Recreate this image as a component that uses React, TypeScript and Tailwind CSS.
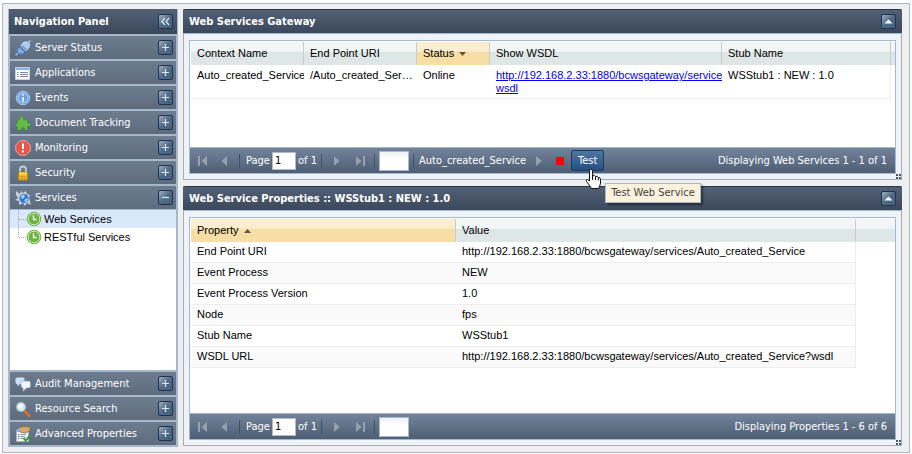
import React from "react";

const sansUi = "font-['DejaVu_Sans_Condensed','DejaVu_Sans',sans-serif]";
const sansGrid = "font-['Liberation_Sans',Arial,sans-serif]";

type IconName = "plug" | "list" | "info" | "puzzle" | "alert" | "lock" | "globe" | "chat" | "search" | "props";

function Icon({ name }: { name: IconName }) {
  return (
    <svg viewBox="0 0 16 16" className="size-4 shrink-0" aria-hidden="true">
      {name === "plug" && (
        <g>
          <path d="M.5 15.5 3 13" stroke="#8fbcf0" strokeWidth="1.6" />
          <path d="M2.3 9.2 5 6.5 10.3 11.8 7.5 14Q4.500 14.500 2.700 13.200 1.500 11.500 2.300 9.200Z" fill="#76a9e8" stroke="#3c6ca8" strokeWidth=".7" />
          <path d="M5.600 5.800 8.500 2.200Q11.500 1 13.800 2.600 15.200 5 14 7.600L10.800 11Z" fill="#a8cdf5" stroke="#d7e9fb" strokeWidth=".7" />
          <path d="M4.500 6 11 12.300M7 5.500l4.500 4.500" stroke="#36597f" strokeWidth="1" />
          <path d="M13.500 2.500 15.500.5" stroke="#8fbcf0" strokeWidth="1.600" />
        </g>
      )}
      {name === "list" && (
        <g>
          <path fill="#fff" stroke="#b9d3f4" d="M.5 2.500h14v12H.5z" />
          <path fill="#86b1ec" d="M1 3h13v2H1z" />
          <path stroke="#6f8fb4" d="M2 7.500h1.500M2 9.500h1.500M2 11.500h1.500" />
          <path stroke="#7b8794" d="M5 7.500h8M5 9.500h8M5 11.500h8" />
        </g>
      )}
      {name === "info" && (
        <g>
          <circle cx="8" cy="8" r="6.800" fill="#5b92d8" stroke="#a9cdf5" />
          <circle cx="8" cy="8" r="5" fill="#6c9fdf" stroke="#e3effc" strokeWidth=".8" />
          <path stroke="#fff" strokeWidth="1.600" d="M8 4.300v1.400M8 7v4.500" />
        </g>
      )}
      {name === "puzzle" && (
        <path
          d="M5 5 4.500 3Q5 .800 7 1.200 9 1.500 8.500 3.500L8.500 5H12.500V8Q15.500 7 15.500 9.500 15.500 12 12.500 11V15H9.500Q10 12.500 8 12.500 6.200 12.500 6.500 15H2.500V12Q.500 12 .5 9.800.500 8 2.500 8.500V5Z"
          fill="#63bb4b"
          stroke="#3f9433"
          strokeWidth=".7"
        />
      )}
      {name === "alert" && (
        <g>
          <path d="M5 .8h6L15.200 5v6L11 15.200H5L.8 11V5Z" fill="#e4574c" stroke="#f4a29a" />
          <path stroke="#fff" strokeWidth="2" d="M8 3.500v5.500M8 10.500v2" />
        </g>
      )}
      {name === "lock" && (
        <g>
          <path d="M5 8V4.500Q5 1.500 8 1.500T11 4.500V8" fill="none" stroke="#c9ccd0" strokeWidth="1.800" />
          <rect x="3.500" y="7" width="9" height="8" rx="1" fill="#f4bd1c" stroke="#b98410" strokeWidth=".8" />
          <path stroke="#ffe77b" strokeWidth="1.500" d="M4.500 8.500h7" />
          <path stroke="#dc9b10" d="M4.500 11.500h7M4.500 13.500h7" />
        </g>
      )}
      {name === "globe" && (
        <g>
          <path d="m1 1 4 3 1-3 2 2 3-2 1 3 3 1-1 3 1 3 1 4-4-2-2 3-2-3-4 2V11L0 10l3-2-2-3Z" fill="#c5d0dc" />
          <circle cx="9" cy="8.500" r="4.500" fill="#2f75dc" />
          <path d="M6 6.500Q8 4 10 6L8.500 8 7 9ZM10 9l3-.5-1.500 3-2 .5Z" fill="#bfe0ff" />
        </g>
      )}
      {name === "chat" && (
        <g>
          <path d="M2.500 1.500H8Q9.500 1.500 9.500 3V6.500Q9.500 8 8 8H5L2.500 10.500V8Q.500 8 .500 6.500V3Q.500 1.500 2.500 1.500Z" fill="#cfe1f7" />
          <path d="M7.500 5H13.500Q15.500 5 15.500 6.800V10Q15.500 12 13.500 12H11.500L8 15.500V12Q6 11.500 6 10V6.800Q6 5 7.500 5Z" fill="#f1f6fd" stroke="#8298b3" strokeWidth=".6" />
        </g>
      )}
      {name === "search" && (
        <g>
          <path d="m9.500 10 5 5" stroke="#e8731c" strokeWidth="2.400" strokeLinecap="round" />
          <circle cx="6" cy="6" r="4.500" fill="#d7ebfb" stroke="#a6b8c9" strokeWidth="1.200" />
          <circle cx="5" cy="5" r="2" fill="#fff" />
        </g>
      )}
      {name === "props" && (
        <g>
          <path d="M1.500 5.500h12v10h-12z" fill="#f3f7fc" stroke="#9fb4cc" strokeWidth=".7" />
          <path d="M4 1.500 9 .5l6 .5v4L10 7 5 6 3 4Z" fill="#d9a76b" stroke="#8e6434" strokeWidth=".7" />
          <path d="M1.500 3.500 5 2v3H1Z" fill="#7fb0ea" />
          <path stroke="#5d7fa6" d="M3 8.500h1.500M3 10.500h1.500M3 12.500h1.500" />
          <path stroke="#8c98a5" d="M5.500 8.500H11M5.500 10.500H10M5.500 12.500H8" />
          <path d="m8.500 12 2.300 2.500L15 9.500" fill="none" stroke="#2ba32b" strokeWidth="2" />
        </g>
      )}
    </svg>
  );
}

type ToolKind = "plus" | "minus" | "left" | "up";

function ToolButton({ kind, label }: { kind: ToolKind; label: string }) {
  return (
    <button
      type="button"
      aria-label={label}
      className="flex size-[15px] shrink-0 items-center justify-center rounded-[2px] border border-[#1d3350] bg-linear-to-br from-[#a3b0bd] via-[#4f6a86] to-[#46617f]"
    >
      <svg viewBox="0 0 13 13" className="size-[13px] shrink-0" fill="none" stroke="#dfe6ee" aria-hidden="true">
        {kind === "plus" && <path d="M3 6.500h7M6.500 3v7" strokeWidth="1.200" />}
        {kind === "minus" && <path d="M3 6.500h7" strokeWidth="1.200" />}
        {kind === "left" && <path d="M6 3 3 6.500 6 10M10 3 7 6.500 10 10" strokeWidth="1.300" />}
        {kind === "up" && <path d="M2.500 8.500 6.500 4.500 10.500 8.500Z" fill="#fff" stroke="none" />}
      </svg>
    </button>
  );
}

function NavItem({ icon, text, open = false }: { icon: IconName; text: string; open?: boolean }) {
  return (
    <div className="flex h-[23px] shrink-0 items-center bg-linear-to-b from-[#6e7c90] to-[#5d6b7d] pr-[3px] pl-[5px]">
      <Icon name={icon} />
      <span className="ml-1 flex-1 text-[11px] leading-4 text-white">{text}</span>
      <ToolButton kind={open ? "minus" : "plus"} label={`${open ? "Collapse" : "Expand"} ${text}`} />
    </div>
  );
}

function TreeLeaf({ text, selected = false }: { text: string; selected?: boolean }) {
  return (
    <li className={`flex h-[18px] items-center pl-2 ${selected ? "bg-[#d9e8fb]" : ""}`}>
      <svg viewBox="0 0 8 18" className="h-[18px] w-2 shrink-0" fill="none" stroke="#a5a5a5" strokeDasharray="1 1" aria-hidden="true">
        <path d={selected ? "M.5 0v18M1 9.500h7" : "M.5 0v9M1 9.500h7"} />
      </svg>
      <svg viewBox="0 0 16 16" className="size-4 shrink-0" aria-hidden="true">
        <circle cx="8" cy="8" r="6.800" fill="#6db33f" stroke="#6db33f" />
        <circle cx="8" cy="8" r="5.800" fill="none" stroke="#eaf6e0" strokeWidth=".8" />
        <path d="M7.500 4v4.500h3" fill="none" stroke="#fff" strokeWidth="1.300" />
      </svg>
      <a href="#" className="ml-[2px] text-[11px] leading-4 text-black">
        {text}
      </a>
    </li>
  );
}

function Navigation() {
  return (
    <nav className={`flex w-[170px] shrink-0 flex-col gap-[2px] border-x-2 border-b-2 border-[#a5b8cc] bg-[#a5b8cc] ${sansUi}`}>
      <header className="-mx-px flex h-[25px] shrink-0 items-center justify-between bg-linear-to-b from-[#536177] to-[#3b485b] pr-1 pl-[5px]">
        <h2 className="text-[11px] leading-4 font-bold text-white">Navigation Panel</h2>
        <ToolButton kind="left" label="Collapse navigation" />
      </header>
      <NavItem icon="plug" text="Server Status" />
      <NavItem icon="list" text="Applications" />
      <NavItem icon="info" text="Events" />
      <NavItem icon="puzzle" text="Document Tracking" />
      <NavItem icon="alert" text="Monitoring" />
      <NavItem icon="lock" text="Security" />
      <NavItem icon="globe" text="Services" open />
      <ul className={`-mt-px flex-1 bg-white ${sansGrid}`}>
        <TreeLeaf text="Web Services" selected />
        <TreeLeaf text="RESTful Services" />
      </ul>
      <NavItem icon="chat" text="Audit Management" />
      <NavItem icon="search" text="Resource Search" />
      <NavItem icon="props" text="Advanced Properties" />
    </nav>
  );
}

function Separator() {
  return <span className="h-[14px] w-px shrink-0 bg-[#3f5068]" />;
}

function PageButton({ label, path, bar, className }: { label: string; path: string; bar?: string; className: string }) {
  return (
    <button type="button" aria-label={label} className={`shrink-0 ${className}`}>
      <svg viewBox="0 0 12 12" className="size-3" aria-hidden="true">
        <path d={path} fill="#97a1ae" />
        {bar && <path d={bar} fill="#97a1ae" />}
      </svg>
    </button>
  );
}

function Pager({ id, summary, children }: { id: string; summary: string; children?: React.ReactNode }) {
  return (
    <footer
      className={`flex h-[26px] shrink-0 items-center border-t border-[#a5b8cc] bg-linear-to-b from-[#72839b] to-[#4e5e74] pr-2 pl-[7px] text-[11px] leading-4 whitespace-nowrap text-white ${sansUi}`}
    >
      <PageButton label="First page" path="M10 1v10L4.500 6Z" bar="M1 1h2v10H1z" className="w-3" />
      <PageButton label="Previous page" path="M8 1v10L2.500 6Z" className="ml-[10px] w-3" />
      <span className="ml-2 flex w-[82px] items-center">
        <Separator />
        <label htmlFor={`${id}-page`} className="ml-[6px] w-[26px] shrink-0">
          Page
        </label>
        <input
          id={`${id}-page`}
          defaultValue="1"
          className="h-[18px] w-6 shrink-0 border border-[#b5b8c8] bg-white px-[2px] text-black"
        />
        <span className="ml-[2px]">of 1</span>
      </span>
      <span className="flex items-center">
        <Separator />
        <PageButton label="Next page" path="M3 1v10L8.500 6Z" className="ml-[9px] w-3" />
        <PageButton label="Last page" path="M2 1v10L7.500 6Z" bar="M9 1h2v10H9z" className="ml-[11px] w-3" />
      </span>
      <span className="ml-2 flex items-center">
        <Separator />
        <input
          aria-label="Page size"
          className="ml-1 h-5 w-[30px] border border-[#a9b9cb] bg-linear-to-b from-[#eef0f2] to-white to-40% px-[2px] text-black"
        />
      </span>
      {children}
      <span className="ml-auto">{summary}</span>
    </footer>
  );
}

function Panel({ title, className, children }: { title: string; className: string; children: React.ReactNode }) {
  return (
    <section className={`relative flex flex-col border border-t-0 border-[#a9adb5] bg-[#eef3f9] ${className}`}>
      <header
        className={`-mx-px flex h-[25px] shrink-0 items-center justify-between rounded-t-[2px] border-t border-b border-t-[#28364a] border-b-[#a5b8cc] bg-linear-to-b from-[#536177] to-[#3b485b] pr-[6px] pl-[6px] ${sansUi}`}
      >
        <h2 className="text-[11px] leading-4 font-bold text-white">{title}</h2>
        <ToolButton kind="up" label={`Collapse ${title}`} />
      </header>
      <div className="m-[5px] mt-[6px] flex flex-1 flex-col border border-[#a5b8cc] bg-white">{children}</div>
      <svg viewBox="0 0 5 5" className="absolute right-0 bottom-0 size-[5px]" aria-hidden="true">
        <path d="M0 0h2v2H0zM3 0h2v2H3zM0 3h2v2H0zM3 3h2v2H3z" fill="#3f5a74" />
      </svg>
    </section>
  );
}

const headCell =
  "h-[23px] border-r border-[#c9cdd1] bg-linear-to-b from-[#f2f6f6] from-40% to-[#dfe6e6] to-45% px-[6px] text-left font-normal";
const sortedCell =
  "h-[23px] border-r border-[#c9cdd1] bg-linear-to-b from-[#fbeed0] from-40% to-[#f6dea4] to-45% px-[6px] text-left font-normal";

function SortMark({ up = false }: { up?: boolean }) {
  return (
    <svg viewBox="0 0 7 4" className="ml-[5px] inline-block h-1 w-[7px] align-middle" aria-hidden="true">
      <path d={up ? "M0 4 3.500 0 7 4Z" : "M0 0h7L3.500 4Z"} fill="#6b5434" />
    </svg>
  );
}

function GatewayTable() {
  return (
    <div className={`min-h-[106px] flex-1 pt-px pl-px ${sansGrid}`}>
      <table className="w-full table-fixed border-separate border-spacing-0 text-[11px] leading-[13px] text-black">
        <colgroup>
          <col className="w-[113px]" />
          <col className="w-[113px]" />
          <col className="w-[73px]" />
          <col className="w-[232px]" />
          <col />
          <col className="w-1" />
        </colgroup>
        <thead>
          <tr>
            <th className={headCell}>Context Name</th>
            <th className={headCell}>End Point URI</th>
            <th className={sortedCell}>
              Status
              <SortMark />
            </th>
            <th className={headCell}>Show WSDL</th>
            <th className={headCell}>Stub Name</th>
            <td className="bg-linear-to-b from-[#f2f6f6] from-40% to-[#dfe6e6] to-45%" />
          </tr>
        </thead>
        <tbody>
          <tr className="h-[34px] align-top">
            <td className="overflow-hidden border-b border-[#ededed] pt-1 pl-[6px] whitespace-nowrap">Auto_created_Service</td>
            <td className="truncate border-b border-[#ededed] pt-1 pr-1 pl-[6px]">/Auto_created_Service</td>
            <td className="border-b border-[#ededed] pt-1 pl-[6px]">Online</td>
            <td className="overflow-hidden border-b border-[#ededed] pt-1 pl-[6px] whitespace-nowrap">
              <a href="#" className="text-[#0000ee] underline">
                http://192.168.2.33:1880/bcwsgateway/service
                <br />
                wsdl
              </a>
            </td>
            <td className="border-r border-b border-[#ededed] pt-1 pl-[6px]">WSStub1 : NEW : 1.0</td>
            <td />
          </tr>
        </tbody>
      </table>
    </div>
  );
}

const properties = [
  ["End Point URI", "http://192.168.2.33:1880/bcwsgateway/services/Auto_created_Service"],
  ["Event Process", "NEW"],
  ["Event Process Version", "1.0"],
  ["Node", "fps"],
  ["Stub Name", "WSStub1"],
  ["WSDL URL", "http://192.168.2.33:1880/bcwsgateway/services/Auto_created_Service?wsdl"],
];

function PropertiesTable() {
  return (
    <div className={`flex-1 pt-px pl-px ${sansGrid}`}>
      <table className="w-full table-fixed border-separate border-spacing-0 text-[11px] leading-[13px] text-black">
        <colgroup>
          <col className="w-[265px]" />
          <col />
          <col className="w-[39px]" />
        </colgroup>
        <thead>
          <tr>
            <th className={sortedCell}>
              Property
              <SortMark up />
            </th>
            <th className={headCell}>Value</th>
            <td className="bg-linear-to-b from-[#f2f6f6] from-40% to-[#dfe6e6] to-45%" />
          </tr>
        </thead>
        <tbody>
          {properties.map(([name, value], i) => (
            <tr key={name} className={`h-[21px] align-top ${i % 2 ? "bg-[#fafafa]" : "bg-white"}`}>
              <td className="border-b border-[#ededed] pt-[3px] pl-[6px]">{name}</td>
              <td className="border-r border-b border-[#ededed] pt-[3px] pl-[6px]">{value}</td>
              <td className="bg-white" />
            </tr>
          ))}
        </tbody>
      </table>
    </div>
  );
}

export default function App() {
  return (
    <div className="flex min-h-screen bg-white px-[2px] pt-[3px] pb-px">
      <main className="flex flex-1 gap-[5px] border border-[#a5b8cc] bg-[#efefef] pt-[5px] pr-[7px] pb-[5px] pl-[5px]">
        <Navigation />
        <div className="flex min-w-0 flex-1 flex-col gap-[6px] pb-px">
          <Panel title="Web Services Gateway" className="z-10">
            <GatewayTable />
            <Pager id="gateway" summary="Displaying Web Services 1 - 1 of 1">
              <span className="ml-1 flex items-center">
                <Separator />
                <span className="ml-[5px]">Auto_created_Service</span>
                <svg viewBox="0 0 6 12" className="ml-[10px] h-3 w-[6px]" aria-hidden="true">
                  <path d="M0 1v10L6 6Z" fill="#97a1ae" />
                </svg>
                <span className="ml-[14px] size-2 bg-[#ff0000]" />
                <span className="relative ml-[7px]">
                  <button
                    type="button"
                    aria-describedby="test-tip"
                    className="block h-[21px] w-[33px] rounded-[2px] border border-[#1d3a5c] bg-linear-to-b from-[#4c77a5] to-[#264f7f] text-center"
                  >
                    Test
                  </button>
                  <svg viewBox="0 0 17 22" className="absolute top-[18px] left-[14px] h-[22px] w-[17px]" aria-hidden="true">
                    <path
                      d="M5.500 1.500Q7.500.500 7.500 2.500V8Q9.500 6.500 10.500 8.500 12.500 7.500 13.300 9.500 15.500 9 15.500 11.500V15Q15 18 13.500 20.500H6.500Q4.500 17 1.500 13.500.500 11.500 2.500 11.500L4.500 13V3Q4.500 1.800 5.500 1.500Z"
                      fill="#fff"
                      stroke="#111"
                    />
                    <path d="M7.500 8v4M10.500 8.500V12M13.300 9.500V12.500" stroke="#111" />
                  </svg>
                  <span
                    id="test-tip"
                    role="tooltip"
                    className="absolute top-[33px] left-[34px] flex h-5 items-center border border-[#a5b8cc] bg-[#fbf1dc] px-[5px] text-[#444] shadow-[2px_2px_2px_#00000066]"
                  >
                    Test Web Service
                  </span>
                </span>
              </span>
            </Pager>
          </Panel>
          <Panel title="Web Service Properties :: WSStub1 : NEW : 1.0" className="flex-1">
            <PropertiesTable />
            <Pager id="properties" summary="Displaying Properties 1 - 6 of 6" />
          </Panel>
        </div>
      </main>
    </div>
  );
}
